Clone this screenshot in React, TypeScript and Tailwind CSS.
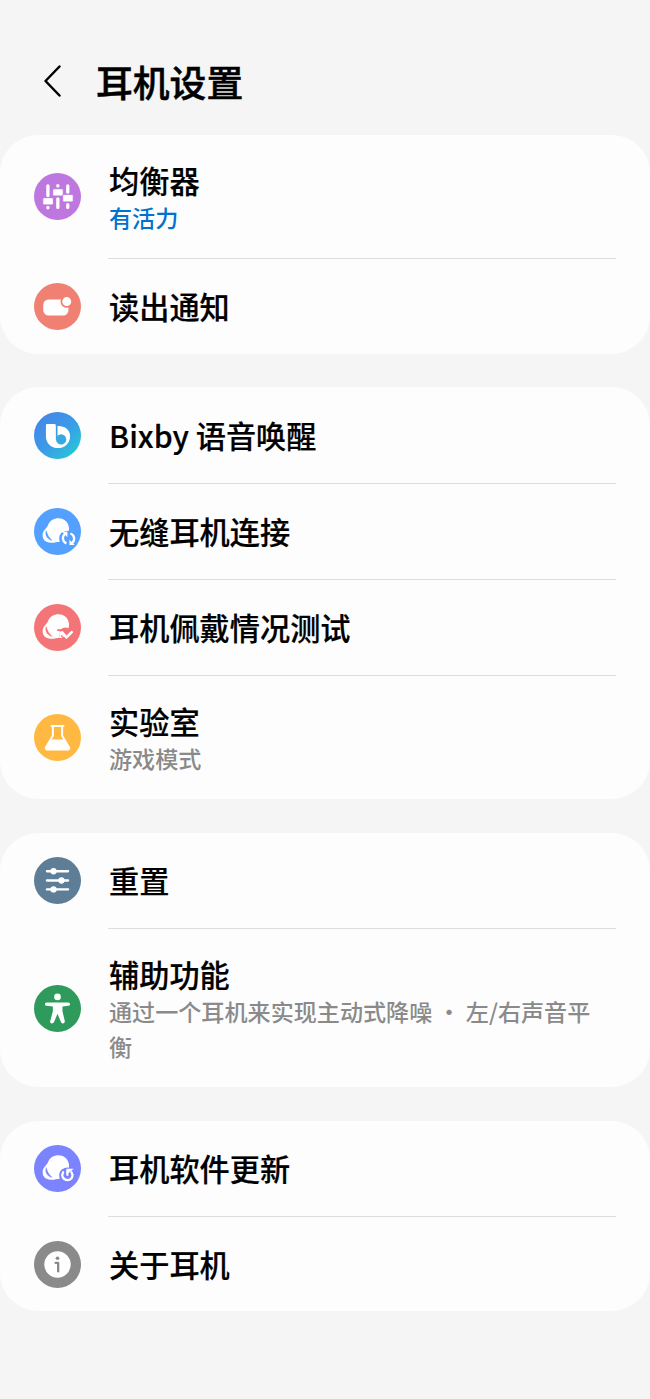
import type { ReactNode } from 'react';

interface SettingItem {
  title: string;
  summary?: string;
  summaryClass?: string;
  icon: ReactNode;
  rowClass: string;
}

/** Earbud silhouette shared by the connection, fit test and update icons. */
const Earbud = ({ color }: { color: string }) => (
  <>
    <path
      d="M42 53C47 38 60 31 74 31C92 31 106 45 106 63C106 67 105 70 104 73C94 69 84 72 79 80C76 86 75 94 78 102C68 102 61 106 50 105C36 104 26 96 26 83C26 69 35 65 42 53Z"
      fill="#fff"
    />
    <path
      d="M37 68C32 82 40 95 55 98C45 90 40 80 37 68Z"
      fill={color}
      stroke={color}
      strokeWidth="1"
      strokeLinejoin="round"
    />
  </>
);

const EqualizerIcon = () => (
  <svg viewBox="0 0 142 142" className="size-[47px] shrink-0">
    <circle cx="71" cy="71" r="71" fill="#be77df" />
    <path
      d="M42 39V68M42 104V105M72 38V39M72 78V104M102 39V58M102 96V104"
      stroke="#fff"
      strokeWidth="10"
      strokeLinecap="round"
    />
    <g fill="#fff" stroke="#be77df" strokeWidth="3">
      <rect x="26.5" y="74.5" width="32" height="22" rx="4" />
      <rect x="56.5" y="47.5" width="32" height="22" rx="4" />
      <rect x="86.5" y="64.5" width="32" height="23" rx="4" />
    </g>
  </svg>
);

const NotificationIcon = () => (
  <svg viewBox="0 0 142 142" className="size-[47px] shrink-0">
    <circle cx="71" cy="71" r="71" fill="#ef8072" />
    <rect x="28" y="50" width="76" height="48" rx="16" fill="#fff" />
    <circle cx="99" cy="56" r="19" fill="#ef8072" />
    <circle cx="99" cy="56" r="13.5" fill="#fff" />
  </svg>
);

const BixbyIcon = () => (
  <svg viewBox="0 0 142 142" className="size-[47px] shrink-0">
    <defs>
      <linearGradient id="bixby" x1="0.2" y1="0.1" x2="0.9" y2="0.85">
        <stop offset="0" stopColor="#4488e8" />
        <stop offset="0.5" stopColor="#3b9be6" />
        <stop offset="1" stopColor="#28c4d8" />
      </linearGradient>
    </defs>
    <circle cx="71" cy="71" r="71" fill="url(#bixby)" />
    <path
      d="M40 36H62Q66 36 66 40V43C91 40 109 53 109 73C109 94 93 109 73 109C51 109 36 93 36 73V40Q36 36 40 36Z"
      fill="#fff"
    />
    <path d="M68.5 38V84" stroke="#3b9ce5" strokeWidth="5" />
    <circle cx="82" cy="83" r="15.5" fill="#34aae1" />
  </svg>
);

const SeamlessIcon = () => (
  <svg viewBox="0 0 142 142" className="size-[47px] shrink-0">
    <circle cx="71" cy="71" r="71" fill="#53a0ff" />
    <Earbud color="#53a0ff" />
    <circle cx="104" cy="92" r="23" fill="#53a0ff" />
    <path
      d="M98 107C85 102 84 86 94 78M110 77C123 82 125 98 115 106"
      fill="none"
      stroke="#fff"
      strokeWidth="7"
    />
    <path d="M85 72H101V88ZM107 96V112H123Z" fill="#fff" />
  </svg>
);

const FitTestIcon = () => (
  <svg viewBox="0 0 142 142" className="size-[47px] shrink-0">
    <circle cx="71" cy="71" r="71" fill="#f47577" />
    <Earbud color="#f47577" />
    <path d="M70 79H86L99 93L111 78" fill="none" stroke="#f47577" strokeWidth="5" strokeLinejoin="round" />
    <path d="M76 84L82 83L94 97L84 103L77 102Z" fill="#fff" />
    <path d="M82 95L90 104" fill="none" stroke="#f47577" strokeWidth="4" />
    <path
      d="M85 86L98 101L114 85"
      fill="none"
      stroke="#fff"
      strokeWidth="8"
      strokeLinecap="round"
      strokeLinejoin="round"
    />
  </svg>
);

const LabsIcon = () => (
  <svg viewBox="0 0 142 142" className="size-[47px] shrink-0">
    <circle cx="71" cy="71" r="71" fill="#ffb943" />
    <path
      d="M53 36H89M57 38V66L36 101Q34 107 39 107H103Q108 107 106 101L85 66V38"
      fill="none"
      stroke="#fff"
      strokeWidth="6"
      strokeLinecap="round"
      strokeLinejoin="round"
    />
    <path d="M51 77H91L106 102Q108 107 103 107H39Q34 107 36 102Z" fill="#fff" />
  </svg>
);

const ResetIcon = () => (
  <svg viewBox="0 0 142 142" className="size-[47px] shrink-0">
    <circle cx="71" cy="71" r="71" fill="#5e7d97" />
    <path
      d="M39 43H103M39 71H103M39 98H103"
      stroke="#fff"
      strokeWidth="7"
      strokeLinecap="round"
    />
    <g fill="#fff">
      <circle cx="59" cy="43" r="9.5" />
      <circle cx="83" cy="71" r="9.5" />
      <circle cx="59" cy="98" r="9.5" />
    </g>
  </svg>
);

const AccessibilityIcon = () => (
  <svg viewBox="0 0 142 142" className="size-[47px] shrink-0">
    <circle cx="71" cy="71" r="71" fill="#2e9a5b" />
    <circle cx="71" cy="36" r="10" fill="#fff" />
    <path
      d="M38 53H104Q109 53 109 58T104 63L86 65V79L93 109Q94 115 88 116Q83 117 81 111L71 87L61 111Q58 117 53 116Q47 114 49 109L57 79V65L38 63Q33 63 33 58T38 53Z"
      fill="#fff"
    />
  </svg>
);

const UpdateIcon = () => (
  <svg viewBox="0 0 142 142" className="size-[47px] shrink-0">
    <circle cx="71" cy="71" r="71" fill="#7b83ff" />
    <Earbud color="#7b83ff" />
    <circle cx="101" cy="91" r="23" fill="#7b83ff" />
    <path
      d="M88 82C82 92 87 106 101 106C115 106 120 92 113 82"
      fill="none"
      stroke="#fff"
      strokeWidth="7"
      strokeLinecap="round"
    />
    <path d="M101 93V76" fill="none" stroke="#fff" strokeWidth="6" />
    <path d="M98 72H120L98 90Z" fill="#fff" />
  </svg>
);

const AboutIcon = () => (
  <svg viewBox="0 0 142 142" className="size-[47px] shrink-0">
    <circle cx="71" cy="71" r="71" fill="#8a8a8a" />
    <circle cx="71" cy="71" r="40" fill="#fff" />
    <circle cx="71" cy="52" r="5.5" fill="#8a8a8a" />
    <path
      d="M65 66H73V92"
      fill="none"
      stroke="#8a8a8a"
      strokeWidth="7"
      strokeLinecap="round"
      strokeLinejoin="round"
    />
  </svg>
);

const groups: SettingItem[][] = [
  [
    {
      title: '均衡器',
      summary: '有活力',
      summaryClass: 'text-[#0072d0]',
      icon: <EqualizerIcon />,
      rowClass: 'h-[124px]',
    },
    { title: '读出通知', icon: <NotificationIcon />, rowClass: 'h-[95px]' },
  ],
  [
    { title: 'Bixby 语音唤醒', icon: <BixbyIcon />, rowClass: 'h-[97px]' },
    { title: '无缝耳机连接', icon: <SeamlessIcon />, rowClass: 'h-[96px]' },
    { title: '耳机佩戴情况测试', icon: <FitTestIcon />, rowClass: 'h-[96px]' },
    { title: '实验室', summary: '游戏模式', icon: <LabsIcon />, rowClass: 'h-[123px]' },
  ],
  [
    { title: '重置', icon: <ResetIcon />, rowClass: 'h-[96px]' },
    {
      title: '辅助功能',
      summary: '通过一个耳机来实现主动式降噪 • 左/右声音平衡',
      icon: <AccessibilityIcon />,
      rowClass: 'h-[158px]',
    },
  ],
  [
    { title: '耳机软件更新', icon: <UpdateIcon />, rowClass: 'h-[96px]' },
    { title: '关于耳机', icon: <AboutIcon />, rowClass: 'h-[94px]' },
  ],
];

const SettingRow = ({
  title,
  summary,
  summaryClass = 'text-[#8a8a8a]',
  icon,
  rowClass,
  divided,
}: SettingItem & { divided: boolean }) => (
  <li className={`flex gap-[27px] px-[34px] ${rowClass}`}>
    <div className={`flex items-center ${divided ? 'pb-px' : ''}`}>{icon}</div>
    <div
      className={`flex min-w-0 flex-1 flex-col justify-center pl-px ${summary ? 'pt-[3px]' : 'pb-px'} ${divided ? 'border-b border-[#dedede]' : ''}`}
    >
      <p className="text-[30.2px] leading-[38px] font-medium text-black [-webkit-text-stroke:0.2px]">
        {title}
      </p>
      {summary && (
        <p className={`mt-px pr-4 text-[23.1px] leading-[35px] font-medium ${summaryClass}`}>
          {summary}
        </p>
      )}
    </div>
  </li>
);

const App = () => (
  <main
    lang="zh-CN"
    className="min-h-[1399px] w-full bg-[#f5f5f5] font-['Noto_Sans_CJK_SC',sans-serif]"
  >
    <header className="flex h-[135px] items-center pt-[27px] pl-[42px]">
      <svg viewBox="0 0 20 34" className="h-[34px] w-5" fill="none">
        <path
          d="M17.5 2.5L3.5 17L17.5 31.5"
          stroke="#000"
          strokeWidth="2.5"
          strokeLinecap="round"
          strokeLinejoin="round"
        />
      </svg>
      <h1 className="ml-[34px] text-[36.8px] leading-[48px] font-medium text-black [-webkit-text-stroke:0.5px]">
        耳机设置
      </h1>
    </header>
    <div className="flex flex-col gap-[34px]">
      {groups.map((items, groupIndex) => (
        <ul
          key={items[0].title}
          className={`rounded-[38px] bg-[#fdfdfd] ${groupIndex === 1 ? '-mt-px' : ''}`}
        >
          {items.map((item, index) => (
            <SettingRow key={item.title} {...item} divided={index < items.length - 1} />
          ))}
        </ul>
      ))}
    </div>
  </main>
);

export default App;
